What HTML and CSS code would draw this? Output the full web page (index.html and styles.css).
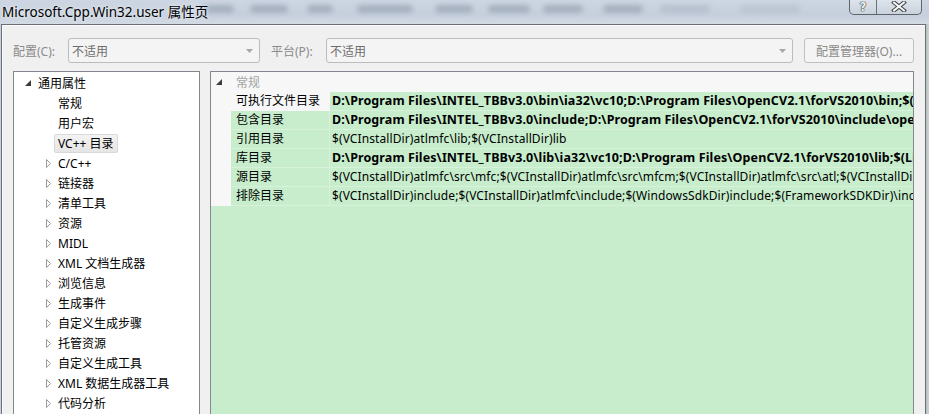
FILE: index.html
```html
<!DOCTYPE html>
<html lang="zh-CN">
<head>
<meta charset="utf-8">
<title>Microsoft.Cpp.Win32.user 属性页</title>
<link rel="stylesheet" href="styles.css">
</head>
<body>
<div class="screen">
  <div class="titlebar">
    <div class="glass">
      <span class="blob b1"></span><span class="blob b2"></span><span class="blob b3"></span><span class="blob b4"></span><span class="blob b5"></span><span class="blob b6"></span><span class="blob b7"></span><span class="blob b8"></span><span class="blob b9"></span><span class="blob b10"></span>
    </div>
    <span class="title">Microsoft.Cpp.Win32.user 属性页</span>
    <div class="caption">
      <span class="cbtn help">?</span>
      <span class="cbtn close">
        <svg width="18" height="11" viewBox="0 0 18 11"><path d="M4 1.5 L14 9.5 M14 1.5 L4 9.5" stroke="#3d3d3d" stroke-width="4" stroke-linecap="square"/><path d="M4 1.5 L14 9.5 M14 1.5 L4 9.5" stroke="#f4f6f8" stroke-width="2" stroke-linecap="square"/></svg>
      </span>
    </div>
  </div>
  <div class="frame">
    <div class="dialog">
      <div class="toolbar">
        <span class="label l1">配置(C):</span>
        <div class="combo c1"><span>不适用</span><svg class="arrow" width="7" height="4" viewBox="0 0 7 4"><path d="M0 0 H7 L3.5 4 Z" fill="#a8a8a8"/></svg></div>
        <span class="label l2">平台(P):</span>
        <div class="combo c2"><span>不适用</span><svg class="arrow" width="7" height="4" viewBox="0 0 7 4"><path d="M0 0 H7 L3.5 4 Z" fill="#a8a8a8"/></svg></div>
        <div class="btn">配置管理器(O)...</div>
      </div>
      <div class="panes">
        <div class="tree">
          <div class="node top"><svg class="exp" width="7" height="7" viewBox="0 0 7 7"><path d="M6 0 V6 H0 Z" fill="#3b3b3b"/></svg><span>通用属性</span></div>
          <div class="node child"><span>常规</span></div>
          <div class="node child"><span>用户宏</span></div>
          <div class="node child"><span class="sel">VC++ 目录</span></div>
          <div class="node sub"><svg class="col" width="6" height="9" viewBox="0 0 6 9"><path d="M0.5 0.5 L4.5 4.5 L0.5 8.5 Z" fill="#fff" stroke="#9a9a9a"/></svg><span>C/C++</span></div>
          <div class="node sub"><svg class="col" width="6" height="9" viewBox="0 0 6 9"><path d="M0.5 0.5 L4.5 4.5 L0.5 8.5 Z" fill="#fff" stroke="#9a9a9a"/></svg><span>链接器</span></div>
          <div class="node sub"><svg class="col" width="6" height="9" viewBox="0 0 6 9"><path d="M0.5 0.5 L4.5 4.5 L0.5 8.5 Z" fill="#fff" stroke="#9a9a9a"/></svg><span>清单工具</span></div>
          <div class="node sub"><svg class="col" width="6" height="9" viewBox="0 0 6 9"><path d="M0.5 0.5 L4.5 4.5 L0.5 8.5 Z" fill="#fff" stroke="#9a9a9a"/></svg><span>资源</span></div>
          <div class="node sub"><svg class="col" width="6" height="9" viewBox="0 0 6 9"><path d="M0.5 0.5 L4.5 4.5 L0.5 8.5 Z" fill="#fff" stroke="#9a9a9a"/></svg><span>MIDL</span></div>
          <div class="node sub"><svg class="col" width="6" height="9" viewBox="0 0 6 9"><path d="M0.5 0.5 L4.5 4.5 L0.5 8.5 Z" fill="#fff" stroke="#9a9a9a"/></svg><span>XML 文档生成器</span></div>
          <div class="node sub"><svg class="col" width="6" height="9" viewBox="0 0 6 9"><path d="M0.5 0.5 L4.5 4.5 L0.5 8.5 Z" fill="#fff" stroke="#9a9a9a"/></svg><span>浏览信息</span></div>
          <div class="node sub"><svg class="col" width="6" height="9" viewBox="0 0 6 9"><path d="M0.5 0.5 L4.5 4.5 L0.5 8.5 Z" fill="#fff" stroke="#9a9a9a"/></svg><span>生成事件</span></div>
          <div class="node sub"><svg class="col" width="6" height="9" viewBox="0 0 6 9"><path d="M0.5 0.5 L4.5 4.5 L0.5 8.5 Z" fill="#fff" stroke="#9a9a9a"/></svg><span>自定义生成步骤</span></div>
          <div class="node sub"><svg class="col" width="6" height="9" viewBox="0 0 6 9"><path d="M0.5 0.5 L4.5 4.5 L0.5 8.5 Z" fill="#fff" stroke="#9a9a9a"/></svg><span>托管资源</span></div>
          <div class="node sub"><svg class="col" width="6" height="9" viewBox="0 0 6 9"><path d="M0.5 0.5 L4.5 4.5 L0.5 8.5 Z" fill="#fff" stroke="#9a9a9a"/></svg><span>自定义生成工具</span></div>
          <div class="node sub"><svg class="col" width="6" height="9" viewBox="0 0 6 9"><path d="M0.5 0.5 L4.5 4.5 L0.5 8.5 Z" fill="#fff" stroke="#9a9a9a"/></svg><span>XML 数据生成器工具</span></div>
          <div class="node sub"><svg class="col" width="6" height="9" viewBox="0 0 6 9"><path d="M0.5 0.5 L4.5 4.5 L0.5 8.5 Z" fill="#fff" stroke="#9a9a9a"/></svg><span>代码分析</span></div>
        </div>
        <div class="grid">
          <div class="cat"><span class="gut"><svg width="7" height="7" viewBox="0 0 7 7"><path d="M6 0 V6 H0 Z" fill="#3b3b3b"/></svg></span><span class="catname">常规</span></div>
          <div class="prop selrow"><span class="gut"></span><span class="pname">可执行文件目录</span><span class="pval b">D:\Program Files\INTEL_TBBv3.0\bin\ia32\vc10;D:\Program Files\OpenCV2.1\forVS2010\bin;$(ExecutablePath)</span></div>
          <div class="prop"><span class="gut"></span><span class="pname">包含目录</span><span class="pval b">D:\Program Files\INTEL_TBBv3.0\include;D:\Program Files\OpenCV2.1\forVS2010\include\opencv;$(IncludePath)</span></div>
          <div class="prop"><span class="gut"></span><span class="pname">引用目录</span><span class="pval">$(VCInstallDir)atlmfc\lib;$(VCInstallDir)lib</span></div>
          <div class="prop"><span class="gut"></span><span class="pname">库目录</span><span class="pval b">D:\Program Files\INTEL_TBBv3.0\lib\ia32\vc10;D:\Program Files\OpenCV2.1\forVS2010\lib;$(LibraryPath)</span></div>
          <div class="prop"><span class="gut"></span><span class="pname">源目录</span><span class="pval">$(VCInstallDir)atlmfc\src\mfc;$(VCInstallDir)atlmfc\src\mfcm;$(VCInstallDir)atlmfc\src\atl;$(VCInstallDir)crt\src;</span></div>
          <div class="prop"><span class="gut"></span><span class="pname">排除目录</span><span class="pval">$(VCInstallDir)include;$(VCInstallDir)atlmfc\include;$(WindowsSdkDir)include;$(FrameworkSDKDir)\include;</span></div>
          <div class="fill"></div>
        </div>
      </div>
    </div>
    <div class="outside"></div>
  </div>
</div>
</body>
</html>
```
FILE: styles.css
```css
* { box-sizing: border-box; }
html, body { margin: 0; padding: 0; }
body {
  width: 929px; height: 414px; overflow: hidden;
  font-family: "Noto Sans", "Noto Sans CJK SC", sans-serif;
  font-size: 12px; color: #000;
}
.screen {
  width: 929px; height: 414px; overflow: hidden;
  display: flex; flex-direction: column;
  background: #c8d2de;
}
.titlebar {
  height: 24px; flex: none; position: relative;
  background: linear-gradient(180deg, #cdd6e2 0%, #c5cfdc 60%, #d3dae4 100%);
  display: flex; align-items: center;
}
.glass { position: absolute; inset: 0; overflow: hidden; }
.blob {
  position: absolute; top: 5px; height: 8px; border-radius: 4px;
  background: #9ea9b9; filter: blur(2.5px); opacity: .8;
}
.b1 { left: 200px; width: 34px; }
.b2 { left: 250px; width: 38px; }
.b3 { left: 307px; width: 26px; }
.b4 { left: 357px; width: 56px; }
.b5 { left: 435px; width: 38px; }
.b6 { left: 488px; width: 42px; }
.b7 { left: 543px; width: 40px; }
.b8 { left: 603px; width: 40px; }
.b9 { left: 660px; width: 50px; opacity: .4; }
.b10 { left: 740px; width: 60px; opacity: .3; }
.title {
  position: relative; margin-left: 2px; margin-top: -2px;
  font-size: 13.5px; color: #000;
  text-shadow: 0 0 6px #e8edf3, 0 0 3px #eef2f6;
}
.caption {
  position: absolute; top: -1px; right: 7px;
  display: flex; height: 16px;
  border: 1px solid #5d646e; border-top: none;
  border-radius: 0 0 5px 5px; overflow: hidden;
  background: linear-gradient(180deg, #dfe5ec, #c9d2dd);
}
.cbtn { display: flex; align-items: center; justify-content: center; height: 100%; }
.help {
  width: 27px; border-right: 1px solid #6a717b;
  font-family: "DejaVu Sans", sans-serif; font-weight: bold; font-size: 12px;
  color: #eef1f4; text-shadow: 0 0 1px #333, 0 0 1px #333, 0 0 1px #333;
}
.close { width: 44px; }
.frame { flex: 1; display: flex; min-height: 0; }
.dialog {
  margin-left: 1px; width: 925px; flex: none;
  background: #f0f0f0;
  border: 1px solid #6b6f75; border-bottom: none;
  box-shadow: inset 1px 1px 0 #fbfbfb;
  display: flex; flex-direction: column;
  padding: 13px 11px 0 11px;
}
.outside { flex: 1; background: linear-gradient(90deg, #b8c2bd, #c9d3d0); }
.toolbar { display: flex; align-items: center; height: 25px; flex: none; }
.label { color: #8a8a8a; flex: none; }
.l1 { width: 55px; }
.l2 { width: 55px; margin-left: 11px; }
.combo {
  height: 25px; flex: none;
  border: 1px solid #bcbcbc; border-radius: 3px;
  background: #f4f4f4;
  display: flex; align-items: center; justify-content: space-between;
  padding: 0 6px 0 3px; color: #6d6d6d;
}
.c1 { width: 192px; }
.c2 { width: 467px; }
.arrow { margin-top: 1px; }
.btn {
  margin-left: 11px; width: 110px; height: 25px; flex: none;
  border: 1px solid #c0c0c0; border-radius: 3px;
  background: #f4f4f4; color: #8a8a8a;
  display: flex; align-items: center; justify-content: center;
}
.panes { display: flex; gap: 10px; margin-top: 8px; flex: 1; min-height: 0; }
.tree {
  width: 187px; flex: none;
  background: #fff; border: 1px solid #828790; border-bottom: none;
  padding-top: 1px;
}
.node { height: 20px; display: flex; align-items: center; white-space: nowrap; }
.node.top { padding-left: 11px; }
.node.top .exp { margin-right: 6px; margin-top: 1px; }
.node.child { padding-left: 44px; }
.node.sub { padding-left: 32px; }
.node.sub .col { margin-right: 6px; margin-top: 1px; }
.sel {
  margin-left: -4px; padding: 0 3px; height: 19px; line-height: 17px;
  border: 1px solid #d9d9d9; border-radius: 2px;
  background: linear-gradient(180deg, #f3f3f3, #e5e5e5);
}
.grid {
  flex: 1; min-width: 0;
  border: 1px solid #828790; border-bottom: none;
  background: #c7edcc;
  display: flex; flex-direction: column;
}
.cat { height: 20px; display: flex; align-items: center; background: #f7f7f7; flex: none; }
.gut { width: 20px; flex: none; align-self: stretch; background: #f7f7f7; display: flex; align-items: center; justify-content: center; }
.cat .gut svg { margin-left: -3px; margin-top: 1px; }
.catname { color: #a3a3a3; margin-left: 5px; }
.prop { height: 19px; display: flex; flex: none; white-space: nowrap; }
.pname {
  width: 99px; flex: none; padding-left: 5px; line-height: 18px;
  border-bottom: 1px solid #d6f2da; border-right: 1px solid #d6f2da;
}
.selrow .pname { background: #f7f7f7; border-color: #f7f7f7; }
.pval {
  flex: 1; min-width: 0; overflow: hidden; padding-left: 2px; line-height: 18px;
  border-bottom: 1px solid #d6f2da; letter-spacing: 0.1px;
}
.pval.b { font-weight: bold; font-size: 12.5px; letter-spacing: 0.1px; }
.fill { flex: 1; }
```
